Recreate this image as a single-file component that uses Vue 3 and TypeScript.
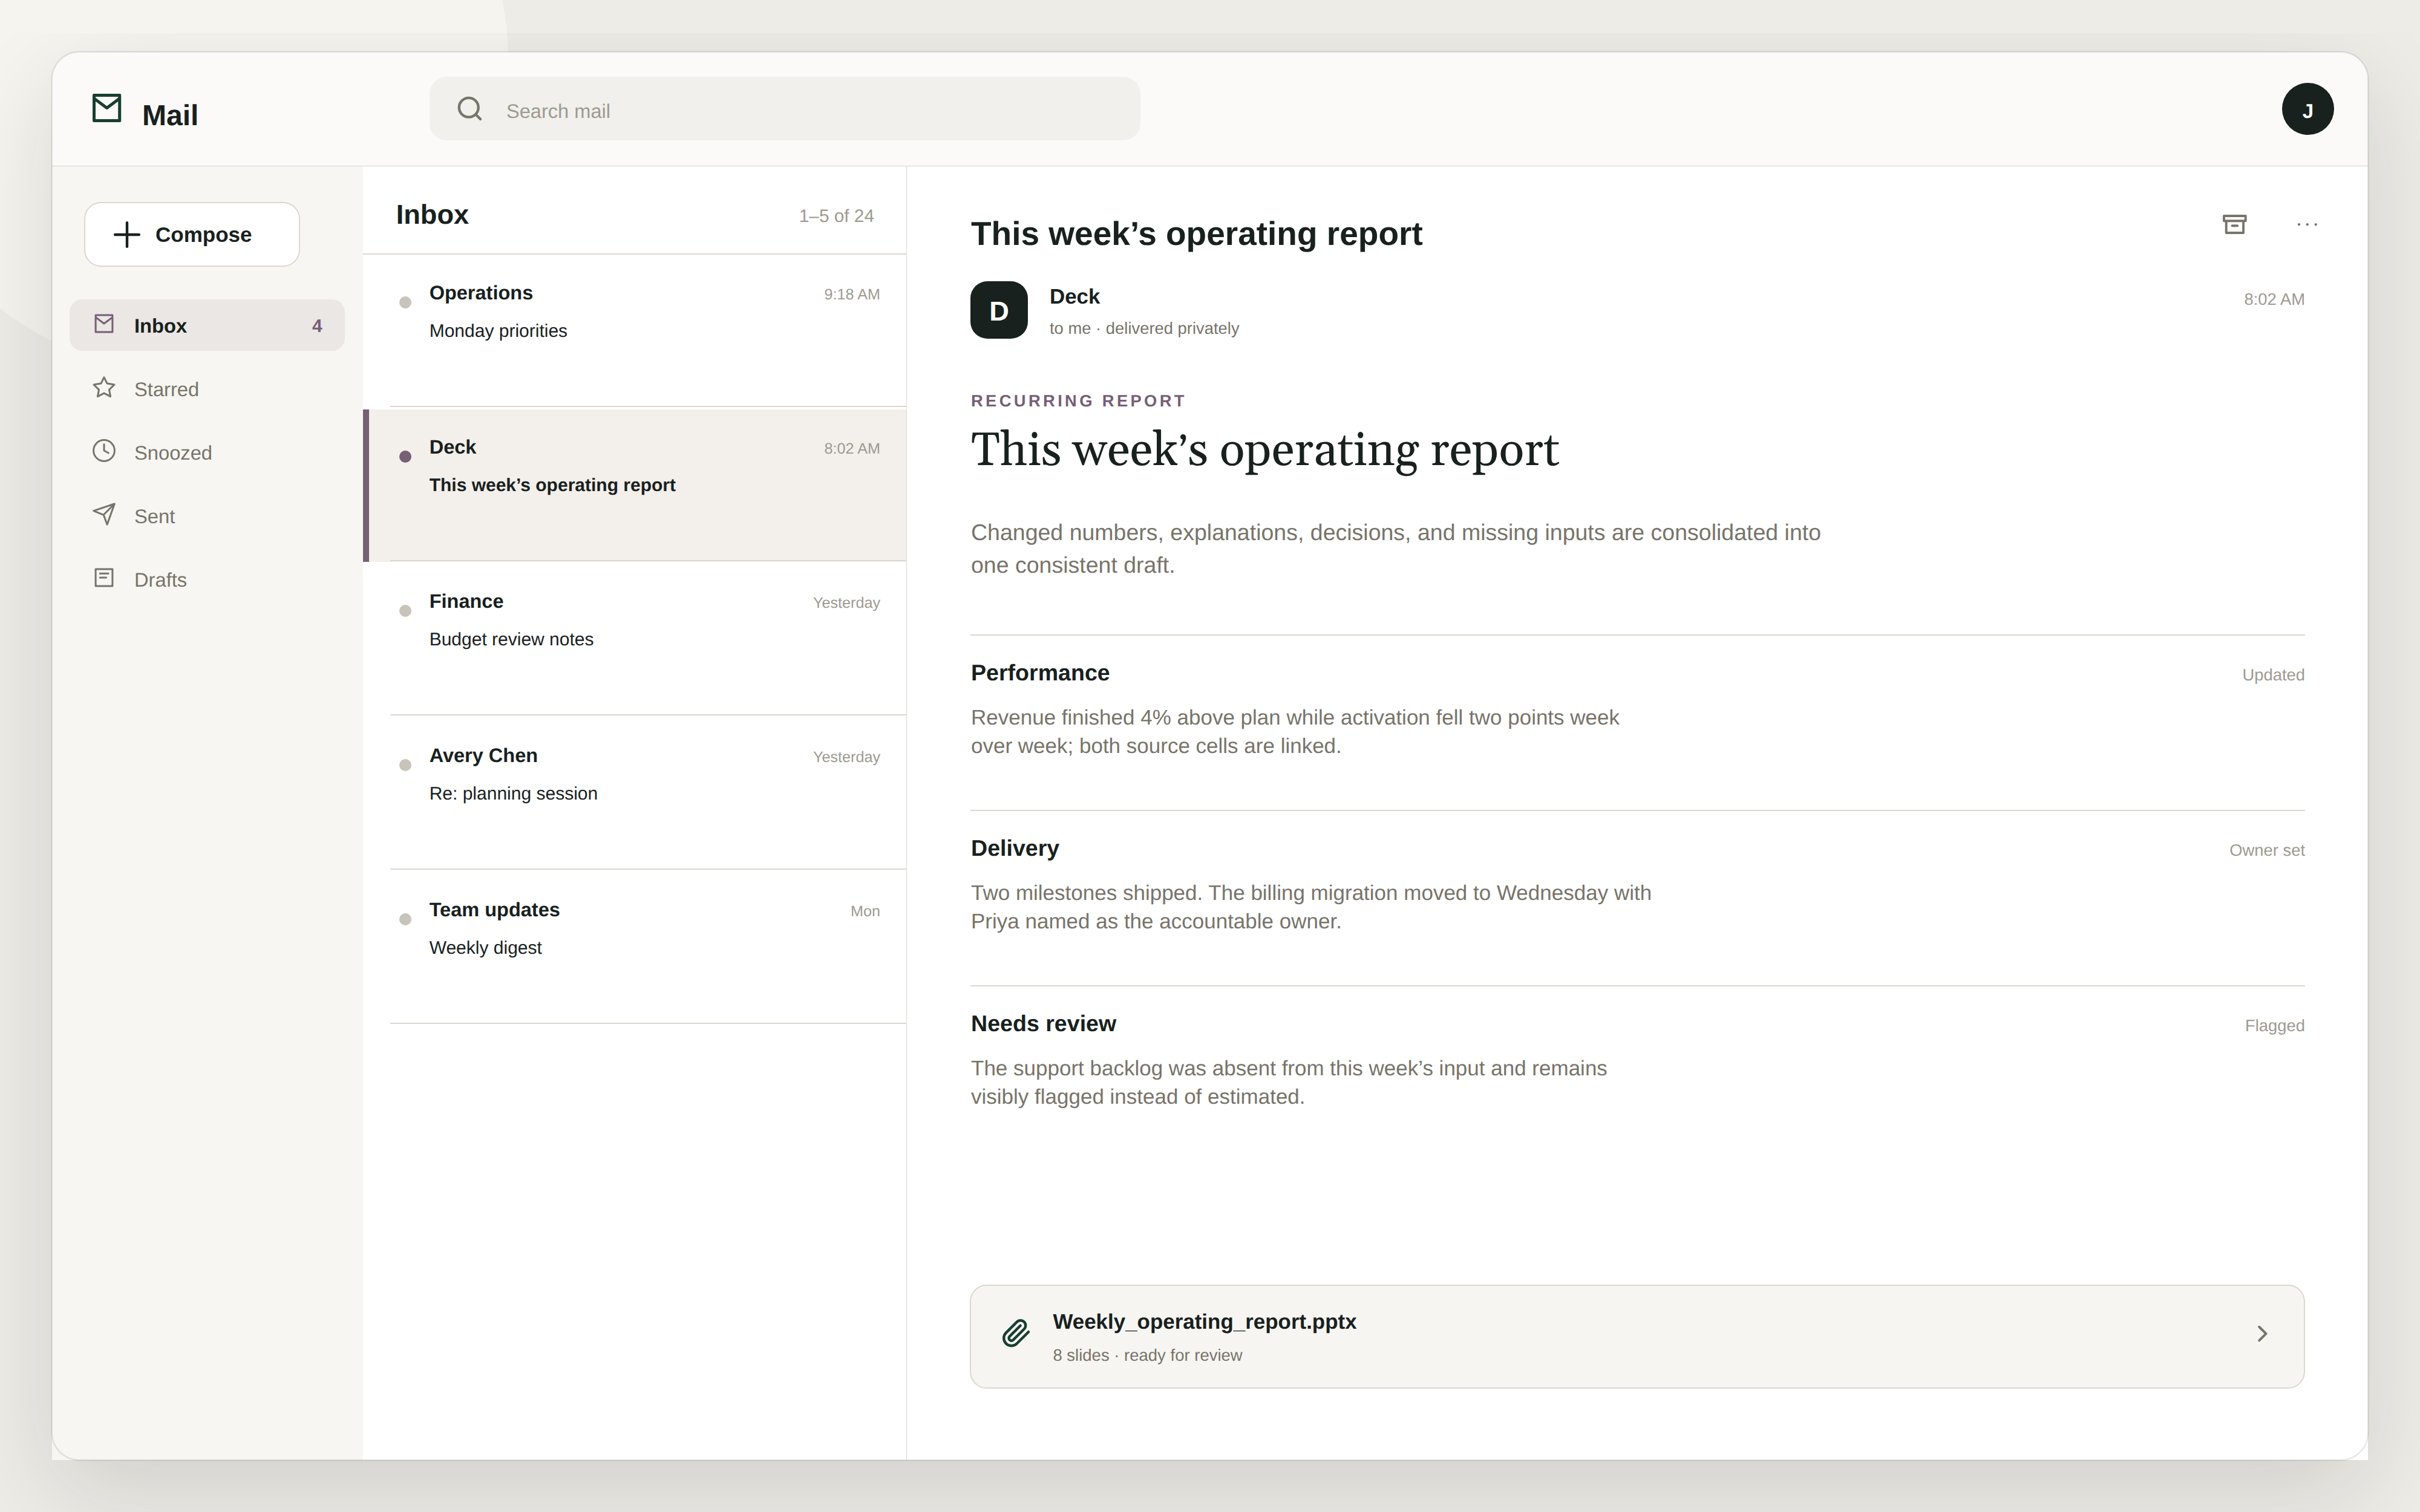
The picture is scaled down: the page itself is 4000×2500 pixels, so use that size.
<script setup lang="ts">
interface NavItem {
  label: string
  icon: 'mail' | 'star' | 'clock' | 'send' | 'draft'
  count?: number
  active?: boolean
}

interface Message {
  sender: string
  subject: string
  time: string
  selected?: boolean
}

interface Section {
  title: string
  status: string
  lines: string[]
}

const nav: NavItem[] = [
  { label: 'Inbox', icon: 'mail', count: 4, active: true },
  { label: 'Starred', icon: 'star' },
  { label: 'Snoozed', icon: 'clock' },
  { label: 'Sent', icon: 'send' },
  { label: 'Drafts', icon: 'draft' },
]

const icons: Record<NavItem['icon'], string> = {
  mail: 'M6.1 6.1H33.9V33.9H6.1ZM6.1 9.6L20 20L33.9 9.6',
  star: 'M20 3.8L25.1 14.1L37 16L28.5 24.4L30.6 35.6L20 30.1L9.4 35.6L11.5 24.4L3 16L14.9 14.1Z',
  clock: 'M37.4 20A17.4 17.4 0 1 1 2.6 20A17.4 17.4 0 1 1 37.4 20ZM20 9.4V20L27.3 24',
  send: 'M37.3 3L2.7 14.6L19.2 21.3L25.1 37.2ZM37.3 3L19.2 21.3',
  draft: 'M6.1 6.1H33.9V33.9H6.1ZM13.2 13.2H27.2M13.2 20H23.6',
}

const messages: Message[] = [
  { sender: 'Operations', subject: 'Monday priorities', time: '9:18 AM' },
  { sender: 'Deck', subject: 'This week’s operating report', time: '8:02 AM', selected: true },
  { sender: 'Finance', subject: 'Budget review notes', time: 'Yesterday' },
  { sender: 'Avery Chen', subject: 'Re: planning session', time: 'Yesterday' },
  { sender: 'Team updates', subject: 'Weekly digest', time: 'Mon' },
]

const sections: Section[] = [
  {
    title: 'Performance',
    status: 'Updated',
    lines: [
      'Revenue finished 4% above plan while activation fell two points week',
      'over week; both source cells are linked.',
    ],
  },
  {
    title: 'Delivery',
    status: 'Owner set',
    lines: [
      'Two milestones shipped. The billing migration moved to Wednesday with',
      'Priya named as the accountable owner.',
    ],
  },
  {
    title: 'Needs review',
    status: 'Flagged',
    lines: [
      'The support backlog was absent from this week’s input and remains',
      'visibly flagged instead of estimated.',
    ],
  },
]
</script>

<template>
  <div class="stage">
    <div class="orb"></div>
    <div class="shadow-clip"><div class="shadow"></div></div>

    <div class="window">
      <header class="topbar">
        <div class="brand">
          <svg class="brand-icon" viewBox="0 0 48 48">
            <path d="M2.5 2.4H44.7V44.6H2.5ZM2.5 7.7L23.6 23.4L44.7 7.7" />
          </svg>
          <span class="brand-name">Mail</span>
        </div>
        <div class="search">
          <svg class="search-icon" viewBox="0 0 24 24">
            <circle cx="11" cy="11" r="7.1" />
            <path d="M16.1 16.1L19.6 19.6" />
          </svg>
          <span class="search-text">Search mail</span>
        </div>
        <div class="user"><span>J</span></div>
      </header>

      <div class="body">
        <aside class="sidebar">
          <button class="compose">
            <svg class="plus" viewBox="0 0 44 44"><path d="M22 2.2V41.8M2.2 22H41.8" /></svg>
            <span>Compose</span>
          </button>
          <nav class="nav">
            <a v-for="item in nav" :key="item.label" class="nav-item" :class="{ active: item.active }">
              <svg class="nav-icon" viewBox="0 0 40 40"><path :d="icons[item.icon]" /></svg>
              <span class="nav-label">{{ item.label }}</span>
              <span v-if="item.count" class="nav-count">{{ item.count }}</span>
            </a>
          </nav>
        </aside>

        <section class="list">
          <div class="list-head">
            <h2>Inbox</h2>
            <span class="range">1–5 of 24</span>
          </div>
          <div class="rows">
            <div v-for="m in messages" :key="m.sender" class="row" :class="{ selected: m.selected }">
              <div class="row-inner">
                <i class="dot"></i>
                <div class="row-text">
                  <div class="row-top">
                    <span class="sender">{{ m.sender }}</span>
                    <span class="time">{{ m.time }}</span>
                  </div>
                  <div class="subject">{{ m.subject }}</div>
                </div>
              </div>
            </div>
          </div>
        </section>

        <main class="reader">
          <div class="title-row">
            <h1>This week’s operating report</h1>
            <svg class="archive" viewBox="0 0 40 32">
              <path d="M2 2H37.7V10.2H2ZM5.7 10.2V30H34.1V10.2M15.6 18.2H24.2" />
            </svg>
            <svg class="more" viewBox="0 0 34 8">
              <circle cx="3" cy="4.2" r="2.1" />
              <circle cx="16.8" cy="4.2" r="2.1" />
              <circle cx="30.7" cy="4.2" r="2.1" />
            </svg>
          </div>

          <div class="from">
            <div class="from-avatar"><span>D</span></div>
            <div class="from-text">
              <div class="from-name">Deck</div>
              <div class="from-sub">to me · delivered privately</div>
            </div>
            <span class="from-time">8:02 AM</span>
          </div>

          <div class="kicker">RECURRING REPORT</div>
          <h2 class="headline">This week<span class="apos">’</span>s operating report</h2>
          <p class="lede">
            Changed numbers, explanations, decisions, and missing inputs are consolidated into<br />one consistent draft.
          </p>

          <section v-for="s in sections" :key="s.title" class="block">
            <div class="block-head">
              <h3>{{ s.title }}</h3>
              <span class="status">{{ s.status }}</span>
            </div>
            <div class="block-body">
              <div v-for="line in s.lines" :key="line">{{ line }}</div>
            </div>
          </section>

          <div class="attachment">
            <svg class="clip" viewBox="0 0 24 24">
              <path
                d="m21.44 11.05-9.19 9.19a6 6 0 0 1-8.49-8.49l8.57-8.57A4 4 0 1 1 18 8.84l-8.59 8.57a2 2 0 0 1-2.83-2.83l8.49-8.48"
              />
            </svg>
            <div class="file">
              <div class="file-name">Weekly_operating_report.pptx</div>
              <div class="file-sub">8 slides · ready for review</div>
            </div>
            <svg class="chevron" viewBox="0 0 16 27"><path d="M2.3 2L13.5 13.2L2.3 24.4" /></svg>
          </div>
        </main>
      </div>
    </div>

    <svg class="outline" viewBox="0 0 4000 2500">
      <rect x="85.7" y="85.7" width="3828.6" height="2328.6" rx="45.5" />
    </svg>
  </div>
</template>

<style>
html,
body {
  margin: 0;
  background: #edece7;
}
</style>

<style scoped>
.stage {
  position: relative;
  box-sizing: border-box;
  width: 4000px;
  height: 2500px;
  padding: 86px;
  overflow: hidden;
  background: #edece7;
  color: #18211e;
  font-family: 'Liberation Sans', Arial, sans-serif;
  text-rendering: geometricPrecision;
  white-space: nowrap;
}
.stage * {
  box-sizing: border-box;
}
svg {
  display: block;
  flex: none;
  fill: none;
  stroke-linecap: round;
  stroke-linejoin: round;
}
h1,
h2,
h3,
p {
  margin: 0;
}
.orb {
  position: absolute;
  left: -200px;
  top: -420px;
  width: 1040px;
  height: 1040px;
  border-radius: 50%;
  background: #f5f4ef;
}
.shadow-clip {
  position: absolute;
  inset: 55px 0 0;
  overflow: hidden;
}
.shadow {
  position: absolute;
  left: 86px;
  top: 31px;
  width: 3828px;
  height: 2328px;
  border-radius: 46px;
  box-shadow: 0 52px 160px rgba(26, 24, 26, 0.135);
}
.outline {
  position: absolute;
  inset: 0;
  width: 4000px;
  height: 2500px;
  stroke: #18211e;
  stroke-opacity: 0.1;
  stroke-width: 2.4;
  pointer-events: none;
}

.window {
  position: relative;
  display: flex;
  flex-direction: column;
  width: 3828px;
  height: 2328px;
  border-radius: 45px 45px 0 0;
  overflow: hidden;
  background: #fff;
}
.topbar {
  display: flex;
  align-items: flex-start;
  height: 189px;
  border-bottom: 1px solid #d9d5cd;
  background: #fbfaf8;
}
.brand {
  display: flex;
  align-items: flex-start;
  width: 624px;
  padding: 69px 0 0 67px;
}
.brand-icon {
  width: 48px;
  height: 48px;
  stroke: #173f32;
  stroke-width: 5;
}
.brand-name {
  margin: 6.5px 0 0 34px;
  font-size: 48px;
  line-height: 60px;
  font-weight: 700;
}
.search {
  display: flex;
  align-items: center;
  width: 1175px;
  height: 105px;
  margin-top: 41px;
  padding-left: 40px;
  border-radius: 28px;
  background: #f1f0ec;
}
.search-icon {
  width: 54px;
  height: 54px;
  stroke: #77746a;
  stroke-width: 1.9;
}
.search-text {
  margin-left: 33px;
  padding-top: 9px;
  font-size: 32.6px;
  line-height: 38px;
  color: #9d9a90;
}
.user {
  display: flex;
  align-items: center;
  justify-content: center;
  width: 86px;
  height: 86px;
  margin: 51px 56px 0 auto;
  border-radius: 50%;
  background: #18211e;
  color: #fff;
  font-size: 33px;
  line-height: 38px;
  font-weight: 700;
}
.user span {
  padding-top: 7px;
}

.body {
  display: flex;
  flex: 1;
  min-height: 0;
}

.sidebar {
  width: 514px;
  padding: 59px 30px 0 29px;
  background: #f7f6f2;
}
.compose {
  display: flex;
  align-items: center;
  width: 357px;
  height: 107px;
  margin: 0 0 54px 24px;
  padding: 0 0 0 47px;
  border: 2px solid #dbd8d0;
  border-radius: 28px;
  background: #fff;
  color: inherit;
  font: 700 35px/44px 'Liberation Sans', Arial, sans-serif;
}
.plus {
  width: 44px;
  height: 44px;
  margin-right: 25px;
  stroke: #18211e;
  stroke-width: 4.4;
}
.nav {
  display: flex;
  flex-direction: column;
  gap: 20px;
}
.nav-item {
  display: flex;
  align-items: center;
  height: 85px;
  padding: 0 37px;
  border-radius: 21px;
  color: #77746a;
  font-size: 32.7px;
  line-height: 40px;
}
.nav-item.active {
  background: #eae7e5;
}
.nav-icon {
  width: 40px;
  height: 40px;
  margin-bottom: 5px;
  stroke: #77746a;
  stroke-width: 3;
}
.active .nav-icon {
  stroke: #775f75;
}
.nav-label {
  margin-left: 30px;
  padding-top: 3px;
}
.active .nav-label {
  color: #18211e;
  font-weight: 700;
}
.nav-count {
  margin-left: auto;
  padding-top: 4px;
  color: #775f75;
  font-size: 30px;
  font-weight: 700;
}

.list {
  width: 900px;
  border-right: 1px solid #dbd8d0;
  background: #fff;
}
.list-head {
  display: flex;
  align-items: flex-start;
  justify-content: space-between;
  height: 146px;
  padding: 52px 53px 0 55px;
  border-bottom: 2px solid #dbd7cf;
}
.list-head h2 {
  font-size: 45.2px;
  line-height: 56px;
  font-weight: 700;
}
.range {
  margin-top: 11px;
  color: #9d9a90;
  font-size: 29.8px;
  line-height: 40px;
}
.rows {
  padding-top: 1px;
}
.row {
  height: 252px;
  margin-bottom: 3px;
  padding-left: 35px;
  border-left: 10px solid transparent;
}
.row.selected {
  border-left-color: #775f75;
  background: #f3efeb;
}
.row-inner {
  display: flex;
  height: 251px;
  border-bottom: 2px solid #dbd8d1;
}
.dot {
  flex: none;
  width: 20px;
  height: 20px;
  margin: 68px 30px 0 15px;
  border-radius: 50%;
  background: #c8c4bb;
}
.selected .dot {
  background: #775f75;
}
.row-text {
  flex: 1;
  padding: 40px 43px 0 0;
}
.row-top {
  display: flex;
  align-items: baseline;
  justify-content: space-between;
  height: 44px;
}
.sender {
  font-size: 32.5px;
  line-height: 45px;
  font-weight: 700;
}
.time {
  color: #9d9a90;
  font-size: 25.2px;
  line-height: 36px;
}
.subject {
  margin-top: 21.5px;
  font-size: 30px;
  line-height: 40px;
}
.selected .subject {
  font-weight: 700;
}

.reader {
  flex: 1;
  padding: 78px 104px 0 106px;
  background: #fff;
}
.title-row {
  display: flex;
  align-items: flex-start;
  height: 64px;
  margin-right: -21px;
}
.title-row h1 {
  margin-right: auto;
  padding-top: 1px;
  font-size: 55px;
  line-height: 64px;
  font-weight: 700;
}
.archive {
  width: 40px;
  height: 32px;
  margin-top: 2px;
  stroke: #77746a;
  stroke-width: 3.9;
}
.more {
  width: 34px;
  height: 8px;
  margin: 14px 0 0 83px;
  fill: #77746a;
}
.from {
  display: flex;
  align-items: flex-start;
  height: 95px;
  margin: 48px 0 0 -1px;
}
.from-avatar {
  display: flex;
  align-items: center;
  justify-content: center;
  width: 95px;
  height: 95px;
  border-radius: 28px;
  background: #18211e;
  color: #fff;
  font-size: 45.2px;
  line-height: 52px;
  font-weight: 700;
}
.from-avatar span {
  padding-top: 5px;
}
.from-text {
  margin: 3.5px 0 0 36px;
}
.from-name {
  font-size: 34.9px;
  line-height: 44px;
  font-weight: 700;
}
.from-sub {
  margin-top: 12.5px;
  color: #77746a;
  font-size: 27.4px;
  line-height: 36px;
}
.from-time {
  margin: 12px 0 0 auto;
  color: #9d9a90;
  font-size: 27.4px;
  line-height: 36px;
}
.kicker {
  margin-top: 85px;
  color: #775f75;
  font-size: 27.4px;
  line-height: 36px;
  font-weight: 700;
  letter-spacing: 0.158em;
}
.headline {
  height: 172px;
  font-family: Georgia, Gelasio, 'Liberation Serif', serif;
  font-size: 77.6px;
  line-height: 132px;
  font-weight: 400;
}
.apos {
  margin: 0 0.02em;
  font-size: 0.8em;
  line-height: 1;
}
.lede {
  height: 196px;
  color: #77746a;
  font-size: 37.5px;
  line-height: 54.3px;
}
.block {
  height: 290px;
  margin-left: -1px;
  padding: 37px 0 0 1px;
  border-top: 2px solid #dbd7cf;
}
.block-head {
  display: flex;
  align-items: baseline;
  justify-content: space-between;
  height: 48px;
}
.block-head h3 {
  font-size: 37.6px;
  line-height: 48px;
  font-weight: 700;
}
.status {
  color: #9d9a90;
  font-size: 27.4px;
  line-height: 36px;
}
.block-body {
  margin-top: 26.5px;
  color: #77746a;
  font-size: 35px;
  line-height: 47.4px;
}
.attachment {
  display: flex;
  align-items: flex-start;
  width: 2207px;
  height: 172px;
  margin: 205px 0 0 -2px;
  padding: 0 60px 0 50px;
  border: 2px solid #dbd8d0;
  border-radius: 28px;
  background: #f7f5f2;
}
.clip {
  width: 50.4px;
  height: 50.4px;
  margin-top: 53px;
  stroke: #173f32;
  stroke-width: 2.1;
}
.file {
  margin: 37.5px 0 0 35px;
}
.file-name {
  font-size: 34.95px;
  line-height: 44px;
  font-weight: 700;
}
.file-sub {
  margin-top: 15.5px;
  color: #77746a;
  font-size: 27.5px;
  line-height: 36px;
}
.chevron {
  width: 16px;
  height: 27px;
  margin: 66px 0 0 auto;
  stroke: #77746a;
  stroke-width: 4;
}
</style>
